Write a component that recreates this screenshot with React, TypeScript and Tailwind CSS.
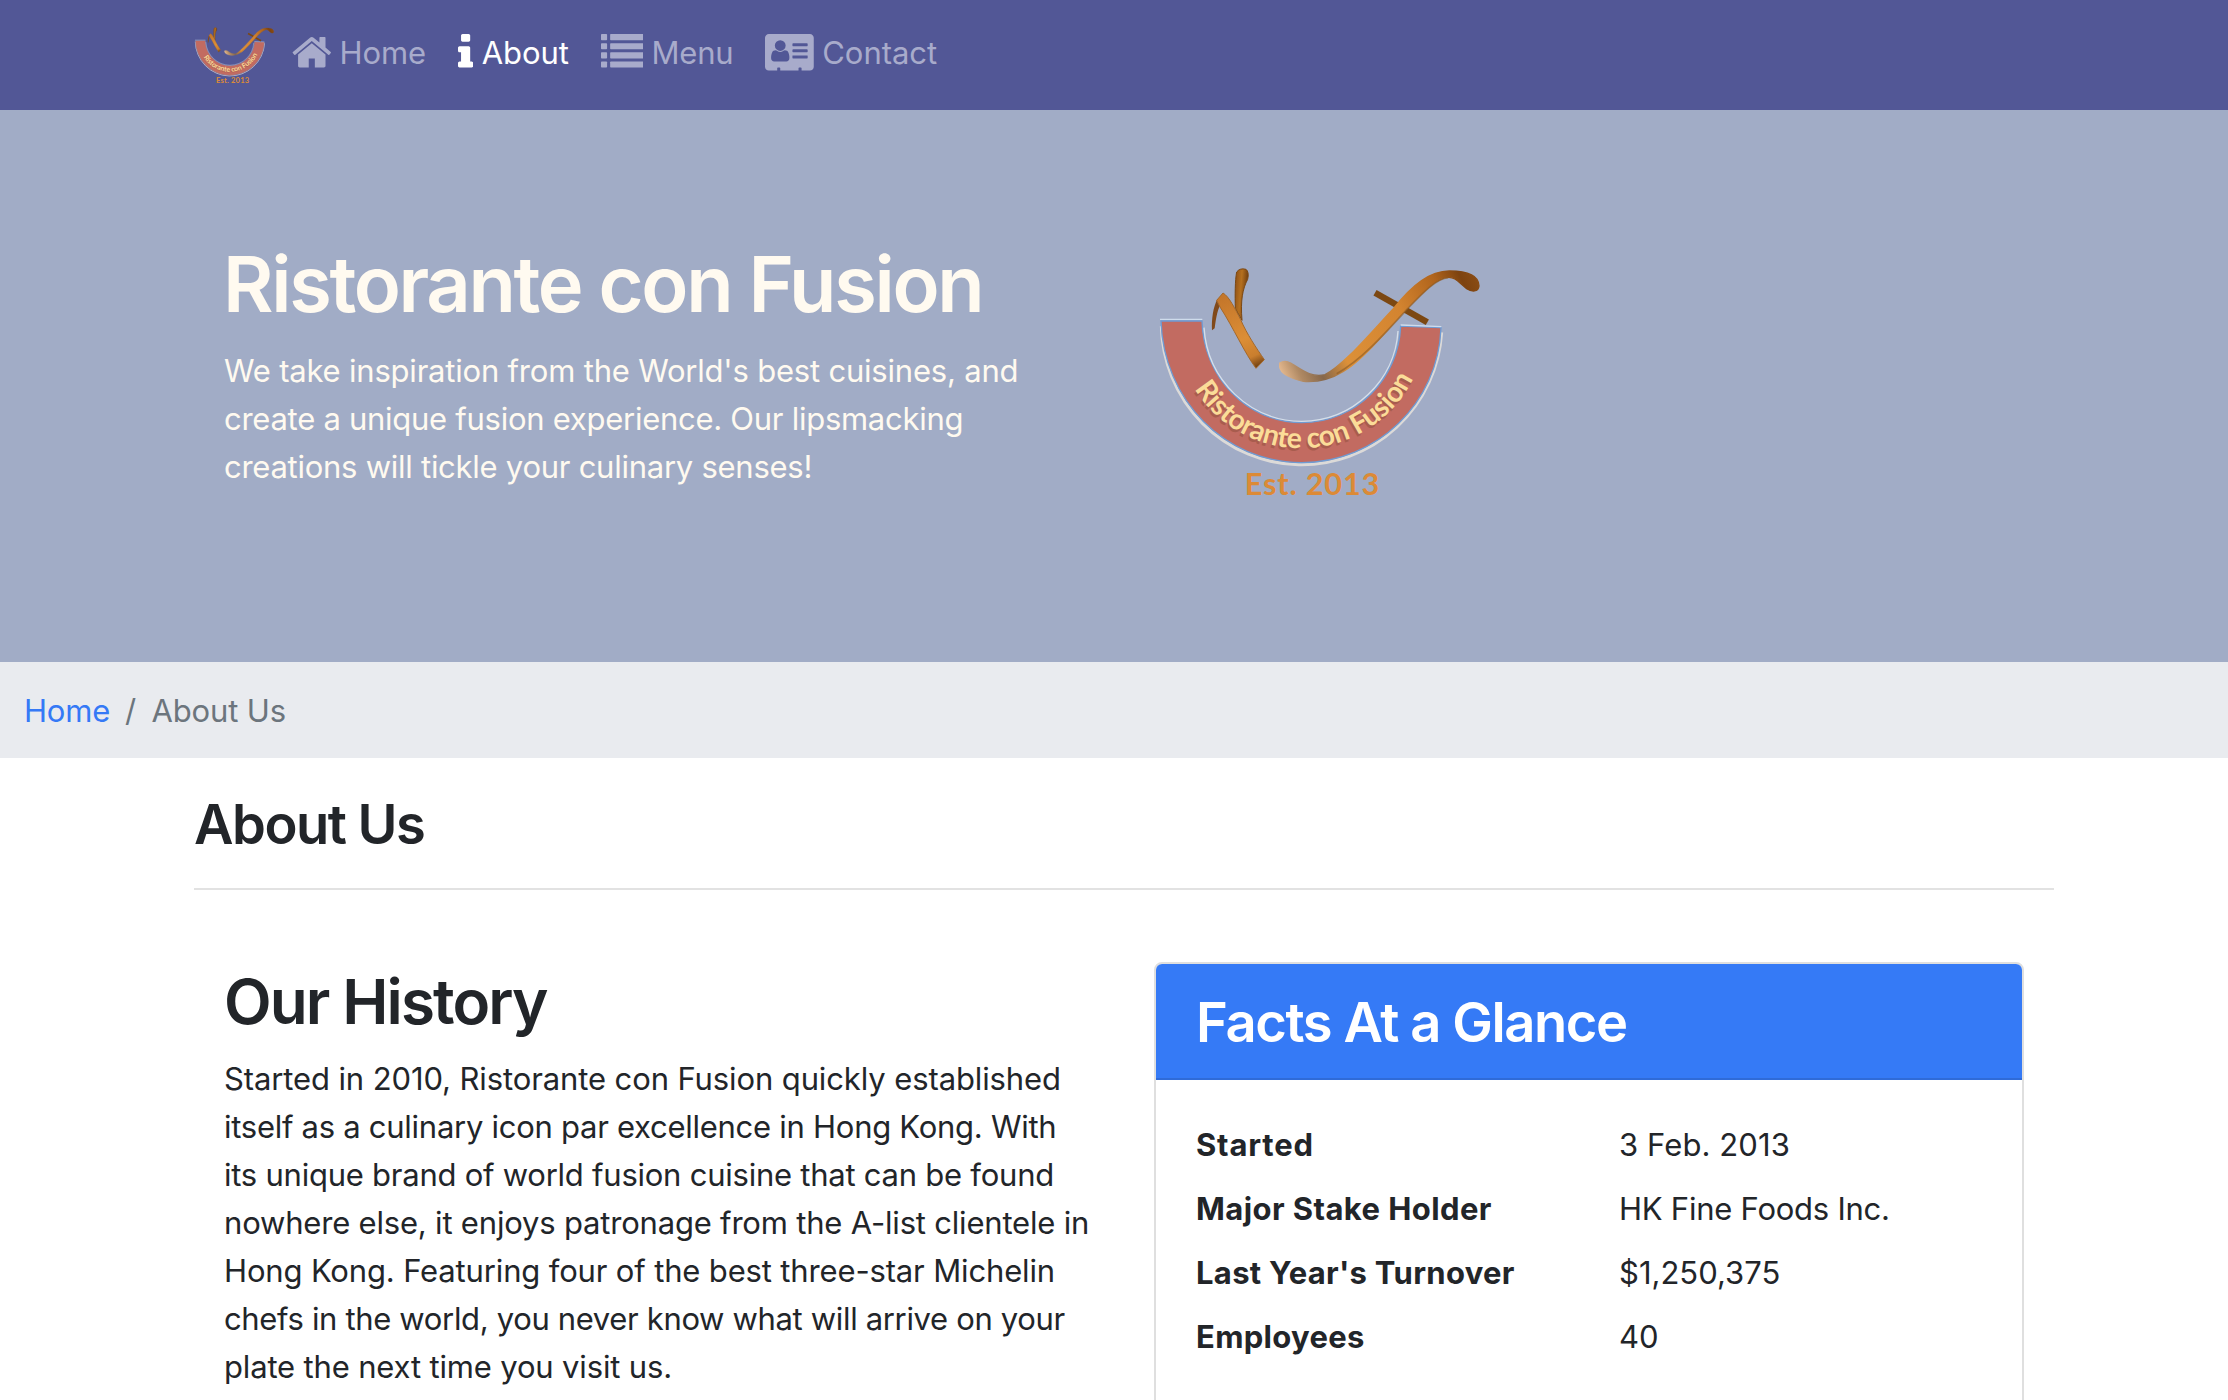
import type { ReactNode } from 'react'

type LogoProps = { id: string; className: string }

function Logo({ id, className }: LogoProps) {
  return (
    <svg viewBox="90 80 960 690" className={`overflow-visible ${className}`} role="img" aria-label="Ristorante con Fusion">
      <defs>
        <linearGradient id={`${id}-sweep`} gradientUnits="userSpaceOnUse" x1="450" y1="400" x2="1047" y2="120">
          <stop offset="0" stopColor="#e8bc92" />
          <stop offset="0.08" stopColor="#b08a64" />
          <stop offset="0.17" stopColor="#86674a" />
          <stop offset="0.3" stopColor="#dc9038" />
          <stop offset="0.62" stopColor="#d38430" />
          <stop offset="0.82" stopColor="#b0641c" />
          <stop offset="0.93" stopColor="#7d4310" />
          <stop offset="1" stopColor="#8a4c14" />
        </linearGradient>
        <linearGradient id={`${id}-stem`} gradientUnits="userSpaceOnUse" x1="300" y1="160" x2="395" y2="375">
          <stop offset="0" stopColor="#c4762a" />
          <stop offset="0.6" stopColor="#dc8e36" />
          <stop offset="0.85" stopColor="#c97e2e" />
          <stop offset="1" stopColor="#6e3f12" />
        </linearGradient>
        <linearGradient id={`${id}-arm`} x1="0" y1="0" x2="1" y2="0.3">
          <stop offset="0" stopColor="#8a4c14" />
          <stop offset="0.5" stopColor="#b5701f" />
          <stop offset="1" stopColor="#6b3a0e" />
        </linearGradient>
        <path id={`${id}-arc`} d="M137 248 A376 376 0 0 0 889 248" />
      </defs>
      <path d="M94 250 A421 425 0 0 0 935 268" fill="none" stroke="#dcdad8" strokeWidth="9" transform="translate(0 8)" />
      <path
        d="M93 242 L216 242 C220 410 350 547 515 547 C680 547 806 415 812 257 L933 262 C925 490 740 666 515 667 C285 666 100 480 93 242Z"
        fill="#c26b61"
        stroke="#6f9bd3"
        strokeWidth="4"
      />
      <path d="M90 237 H217 M812 254 L934 259" stroke="#cfdcec" strokeWidth="4" />
      <path d="M222 262 C232 420 360 542 515 543 C670 542 795 420 804 272" fill="none" stroke="#d5dfea" strokeWidth="4" />
      <path d="M735 157 L892 246" stroke="#7c4812" strokeWidth="19" />
      <path
        d="M449 368 Q464 358 482 368 C520 392 545 412 585 403 C640 375 715 285 790 205 C850 130 900 93 958 92 C1010 92 1046 105 1047 137 C1045 156 1025 155 1010 145 C985 125 975 110 955 111 C920 112 880 155 830 205 C760 285 690 365 640 393 C600 418 560 426 520 423 C485 415 452 400 449 380Z"
        fill={`url(#${id}-sweep)`}
        stroke={`url(#${id}-sweep)`}
        strokeWidth="4"
        strokeLinejoin="round"
      />
      <path d="M620 400 C690 362 760 285 832 206 C880 156 920 114 955 112" fill="none" stroke="#8a5a24" strokeWidth="5" opacity="0.6" />
      <path
        d="M320 95 Q330 82 348 87 Q358 95 353 117 C338 145 331 180 336 240 L316 205 C315 165 315 120 320 95Z"
        fill={`url(#${id}-arm)`}
        stroke="#7c4812"
        strokeWidth="3"
        strokeLinejoin="round"
      />
      <path d="M262 176 L272 190 C260 215 257 242 254 264 L246 270 C244 235 250 200 262 176Z" fill="#80491a" />
      <path
        d="M260 180 L279 158 C297 168 315 205 332 238 C350 280 380 325 403 358 L378 384 C345 340 310 262 270 200Z"
        fill={`url(#${id}-stem)`}
        stroke="#a4682a"
        strokeWidth="3"
        strokeLinejoin="round"
      />
      <text
        fontFamily="Lato, sans-serif"
        fontWeight="700"
        fontSize="85"
        fill="#8f4f3c"
        textLength="800"
        transform="translate(-4 8)"
        opacity="0.5"
      >
        <textPath href={`#${id}-arc`} startOffset="208">
          Ristorante con Fusion
        </textPath>
      </text>
      <text fontFamily="Lato, sans-serif" fontWeight="700" fontSize="85" fill="#fbdc98" textLength="800">
        <textPath href={`#${id}-arc`} startOffset="208">
          Ristorante con Fusion
        </textPath>
      </text>
      <text
        x="344"
        y="763"
        fontFamily="Lato, sans-serif"
        fontWeight="700"
        fontSize="92"
        textLength="404"
        fill="#dc8a36"
      >
        Est. 2013
      </text>
    </svg>
  )
}

function HomeIcon() {
  return (
    <svg viewBox="64 0 1664 1792" className="h-[42.67px] w-[39.6px]" fill="currentColor">
      <path d="M1472 992v480q0 26-19 45t-45 19h-384v-384h-256v384h-384q-26 0-45-19t-19-45v-480q0-1 .5-3t.5-3l575-474 575 474q1 2 1 6zm223-69l-62 74q-8 9-21 11h-3q-13 0-21-7l-692-577-692 577q-12 8-24 7-13-2-21-11l-62-74q-8-10-7-23.5t11-21.5l719-599q32-26 76-26t76 26l244 204v-195q0-14 9-23t23-9h192q14 0 23 9t9 23v408l219 182q10 8 11 21.5t-7 23.5z" />
    </svg>
  )
}

function InfoIcon() {
  return (
    <svg viewBox="576 0 640 1792" className="h-[42.67px] w-[15.24px]" fill="currentColor">
      <path d="M1216 1344v128q0 26-19 45t-45 19h-512q-26 0-45-19t-19-45v-128q0-26 19-45t45-19h64v-384h-64q-26 0-45-19t-19-45v-128q0-26 19-45t45-19h384q26 0 45 19t19 45v576h64q26 0 45 19t19 45zm-128-1152v192q0 26-19 45t-45 19h-256q-26 0-45-19t-19-45v-192q0-26 19-45t45-19h256q26 0 45 19t19 45z" />
    </svg>
  )
}

function ListIcon() {
  return (
    <svg viewBox="0 0 1792 1792" className="size-[42.67px]" fill="currentColor">
      {[128, 512, 896, 1280].map((y) => (
        <g key={y}>
          <rect x="0" y={y} width="256" height="256" rx="32" />
          <rect x="384" y={y} width="1408" height="256" rx="32" />
        </g>
      ))}
    </svg>
  )
}

function CardIcon() {
  return (
    <svg viewBox="0 0 2048 1792" className="h-[42.67px] w-[48.77px]" fill="currentColor">
      <path d="M1024 1131q0-64-9-117.5t-29.5-103-60.5-78-97-28.5q-6 4-30 18t-37.5 21.5-35.5 17.5-43 14.5-42 4.5-42-4.5-43-14.5-35.5-17.5-37.5-21.5-30-18q-57 0-97 28.5t-60.5 78-29.5 103-9 117.5 37 106.5 91 42.5h512q54 0 91-42.5t37-106.5zm-157-520q0-94-66.5-160.5t-160.5-66.5-160.5 66.5-66.5 160.5 66.5 160.5 160.5 66.5 160.5-66.5 66.5-160.5zm925 509v-64q0-14-9-23t-23-9h-576q-14 0-23 9t-9 23v64q0 14 9 23t23 9h576q14 0 23-9t9-23zm0-260v-56q0-15-10.5-25.5t-25.5-10.5h-568q-15 0-25.5 10.5t-10.5 25.5v56q0 15 10.5 25.5t25.5 10.5h568q15 0 25.5-10.5t10.5-25.5zm0-252v-64q0-14-9-23t-23-9h-576q-14 0-23 9t-9 23v64q0 14 9 23t23 9h576q14 0 23-9t9-23zm256-320v1216q0 66-47 113t-113 47h-352v-96q0-14-9-23t-23-9h-64q-14 0-23 9t-9 23v96h-768v-96q0-14-9-23t-23-9h-64q-14 0-23 9t-9 23v96h-352q-66 0-113-47t-47-113v-1216q0-66 47-113t113-47h1728q66 0 113 47t47 113z" />
    </svg>
  )
}

type NavItemProps = { icon: ReactNode; label: string; className: string; labelClass: string }

function NavItem({ icon, label, className, labelClass }: NavItemProps) {
  return (
    <a href="#" className={`flex items-start ${className}`}>
      <span className="mt-[31px] shrink-0">{icon}</span>
      <span className={`mt-[29px] ${labelClass}`}>{label}</span>
    </a>
  )
}

type Line = [text: string, tracking: string]

const HERO: Line[] = [
  ["We take inspiration from the World's best cuisines, and", 'tracking-[-0.2px]'],
  ['create a unique fusion experience. Our lipsmacking', 'tracking-[-0.27px]'],
  ['creations will tickle your culinary senses!', 'tracking-[-0.26px]'],
]

const HISTORY: Line[] = [
  ['Started in 2010, Ristorante con Fusion quickly established', 'tracking-[-0.11px]'],
  ['itself as a culinary icon par excellence in Hong Kong. With', 'tracking-[-0.27px]'],
  ['its unique brand of world fusion cuisine that can be found', 'tracking-[-0.24px]'],
  ['nowhere else, it enjoys patronage from the A-list clientele in', 'tracking-[-0.19px]'],
  ['Hong Kong. Featuring four of the best three-star Michelin', 'tracking-[-0.15px]'],
  ['chefs in the world, you never know what will arrive on your', 'tracking-[-0.34px]'],
  ['plate the next time you visit us.', 'tracking-[-0.16px]'],
]

const FACTS: { label: Line; value: Line }[] = [
  { label: ['Started', 'tracking-[0.826px]'], value: ['3 Feb. 2013', 'tracking-[0.1px]'] },
  { label: ['Major Stake Holder', 'tracking-[0.416px]'], value: ['HK Fine Foods Inc.', 'tracking-[-0.24px]'] },
  { label: ["Last Year's Turnover", 'tracking-[0.305px]'], value: ['$1,250,375', 'tracking-[0px]'] },
  { label: ['Employees', 'tracking-[0.306px]'], value: ['40', 'tracking-[0px]'] },
]

function Paragraph({ lines }: { lines: Line[] }) {
  return (
    <p className="whitespace-nowrap">
      {lines.map(([text, tracking]) => (
        <span key={text} className={`block ${tracking}`}>
          {text}
        </span>
      ))}
    </p>
  )
}

export default function App() {
  return (
    <div className="h-[1400px] w-[2228px] overflow-hidden bg-white font-[Inter,sans-serif] text-[31px] leading-[48px] text-[#222529]">
      <nav className="flex h-[110px] items-start bg-[#525796] pl-[195px] text-[#a8abcb]">
        <Logo id="brand" className="mt-[27px] h-[57px] w-[79px]" />
        <NavItem icon={<HomeIcon />} label="Home" className="ml-[18px]" labelClass="ml-[8px] w-[86.5px] tracking-[-0.1px]" />
        <NavItem
          icon={<InfoIcon />}
          label="About"
          className="ml-[32px] text-white"
          labelClass="ml-[8.5px] w-[88px] tracking-[-0.1px]"
        />
        <NavItem icon={<ListIcon />} label="Menu" className="ml-[31px]" labelClass="ml-[8px] w-[82px] tracking-[-0.17px]" />
        <NavItem icon={<CardIcon />} label="Contact" className="ml-[32px]" labelClass="ml-[8px] tracking-[-0.05px]" />
      </nav>

      <header className="flex h-[552px] bg-[#a1acc6] pl-[224px] text-[#fffaf0]">
        <div className="w-[936px] pt-[126px]">
          <h1 className="-ml-px mb-[15px] text-[77.5px] font-semibold leading-[96px] tracking-[-2.33px] whitespace-nowrap">
            Ristorante con Fusion
          </h1>
          <Paragraph lines={HERO} />
        </div>
        <Logo id="hero" className="mt-[157px] h-[230px] w-[320px]" />
      </header>

      <ol className="flex h-24 bg-[#e9ebef] pb-[23px] pl-6 pt-[25px] text-[#6c757d]">
        <li className="w-[101px] tracking-[-0.2px] text-[#3579f6]">
          <a href="#">Home</a>
        </li>
        <li className="w-[26.5px]">/</li>
        <li className="tracking-[-0.15px]">About Us</li>
      </ol>

      <main className="mx-[194px] w-[1860px] pt-[33px]">
        <h3 className="h-[97px] text-[54.3px] font-semibold leading-[67px] tracking-[-1.5px]">About Us</h3>
        <hr className="border-t-2 border-[#e2e2e2]" />

        <div className="flex gap-[60px] px-[30px] pt-[72px]">
          <section className="w-[870px]">
            <h2 className="mb-[15px] mt-[1px] text-[62px] font-semibold leading-[77px] tracking-[-1.9px]">Our History</h2>
            <Paragraph lines={HISTORY} />
          </section>

          <section className="h-[500px] w-[870px] overflow-hidden rounded-lg border-2 border-[#dfdfdf]">
            <h3 className="h-[116px] border-b-2 border-[#2f6bd8] bg-[#357af6] px-10 pt-[25px] text-[54.3px] font-semibold leading-[67px] tracking-[-1.42px] text-white">
              Facts At a Glance
            </h3>
            <dl className="grid grid-cols-[423px_1fr] gap-y-4 pl-10 pt-[41px]">
              {FACTS.map(({ label, value }) => (
                <div key={label[0]} className="contents">
                  <dt className={`font-bold ${label[1]}`}>{label[0]}</dt>
                  <dd className={value[1]}>{value[0]}</dd>
                </div>
              ))}
            </dl>
          </section>
        </div>
      </main>
    </div>
  )
}
